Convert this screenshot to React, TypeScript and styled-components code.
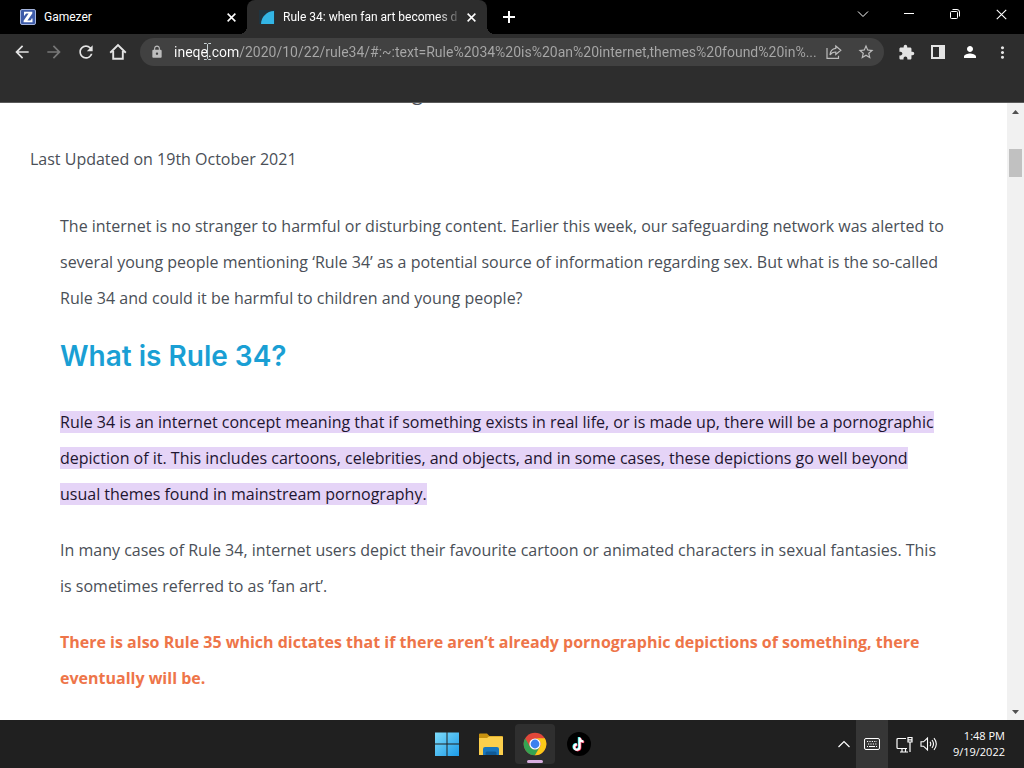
import React from "react";
import styled, { createGlobalStyle } from "styled-components";
import {
  MdArrowBack,
  MdArrowForward,
  MdRefresh,
  MdLock,
  MdStarBorder,
  MdExtension,
  MdPerson,
  MdMoreVert,
} from "react-icons/md";

const GlobalStyle = createGlobalStyle`
  * { box-sizing: border-box; }
  body { margin: 0; background: #fff; }
  button { border: 0; padding: 0; background: none; color: inherit; font: inherit; }
  svg { display: block; }
`;

const uiFont = `Roboto, "Noto Sans", sans-serif`;
const textFont = `"Open Sans", "Noto Sans", sans-serif`;

const Screen = styled.div`
  height: 100vh;
  display: flex;
  flex-direction: column;
  overflow: hidden;
  font-family: ${uiFont};
`;

/* ---------- tab strip ---------- */

const TabStrip = styled.header`
  display: flex;
  height: 34px;
  flex-shrink: 0;
  background: #000;
  color: #fff;
`;

const Tab = styled.div<{ $active?: boolean }>`
  position: relative;
  display: flex;
  align-items: center;
  gap: 8px;
  width: ${(p) => (p.$active ? 240 : 247)}px;
  padding: 0 10px 0 ${(p) => (p.$active ? 12 : 20)}px;
  border-radius: 8px 8px 0 0;
  background: ${(p) => (p.$active ? "#2d2d2d" : "#000")};

  &::before,
  &::after {
    content: ${(p) => (p.$active ? `""` : "none")};
    position: absolute;
    bottom: 0;
    width: 8px;
    height: 8px;
  }
  &::before {
    right: 100%;
    background: radial-gradient(circle at 0 0, #000 8px, #2d2d2d 8px);
  }
  &::after {
    left: 100%;
    background: radial-gradient(circle at 100% 0, #000 8px, #2d2d2d 8px);
  }
`;

const TabTitle = styled.span<{ $fade?: boolean }>`
  flex: 1;
  min-width: 0;
  overflow: hidden;
  white-space: nowrap;
  font-size: 12px;
  line-height: 18px;
  ${(p) => p.$fade && "mask-image: linear-gradient(to right, #000 154px, transparent 180px);"}
`;

const IconButton = styled.button<{ $w?: number; $h?: number; $dim?: boolean }>`
  display: flex;
  align-items: center;
  justify-content: center;
  flex-shrink: 0;
  width: ${(p) => p.$w ?? 32}px;
  height: ${(p) => p.$h ?? 28}px;
  color: ${(p) => (p.$dim ? "#777" : "inherit")};
`;

const NewTab = styled(IconButton)`
  margin-left: 8px;
  align-self: center;
`;

const WindowButtons = styled.div`
  display: flex;
  margin-left: auto;
`;

/* ---------- toolbar ---------- */

const Toolbar = styled.nav`
  display: flex;
  align-items: center;
  gap: 6px;
  height: 36px;
  padding: 0 6px;
  flex-shrink: 0;
  background: #2d2d2d;
  color: #e4e4e4;
`;

const ButtonGroup = styled.div`
  display: flex;
`;

const Omnibox = styled.form`
  display: flex;
  align-items: center;
  flex: 1;
  min-width: 0;
  height: 28px;
  padding-right: 2px;
  border-radius: 14px;
  background: #414141;
  color: #bdbdbd;
`;

const LockSlot = styled.span`
  display: flex;
  justify-content: center;
  width: 34px;
  flex-shrink: 0;
`;

const Address = styled.input`
  flex: 1;
  min-width: 0;
  height: 24px;
  padding: 0;
  border: 0;
  outline: 0;
  font-family: ${uiFont};
  font-size: 14px;
  line-height: 20px;
  color: #b0b0b0;
  background: linear-gradient(to right, #fff 65px, #a8a8a8 65px);
  background-clip: text;
  -webkit-background-clip: text;
  -webkit-text-fill-color: transparent;
`;

const BookmarksBar = styled.div`
  height: 33px;
  flex-shrink: 0;
  background: #2d2d2d;
  border-bottom: 1px solid #5a5a5a;
`;

/* ---------- page ---------- */

const Viewport = styled.main`
  display: flex;
  flex: 1;
  min-height: 0;
  background: #fff;
`;

const Page = styled.div`
  flex: 1;
  min-width: 0;
  overflow: hidden;
  padding: 0 30px;
  color: #4a4f57;
  font-family: ${textFont};
  font-size: 16px;
  line-height: 36px;
`;

const ScrolledLine = styled.p`
  margin: -28px 0 30px;
  padding-left: 382px;
  font-size: 20px;
`;

const Updated = styled.p`
  margin: 0 0 31px;
`;

const Article = styled.article`
  padding: 0 30px;

  p {
    margin: 0 0 20px;
  }
`;

const Heading = styled.h2`
  margin: 0 0 28px;
  font-family: Inter, sans-serif;
  font-size: 28px;
  font-weight: 600;
  line-height: 40px;
  color: #1a9fd4;
`;

const Highlight = styled.mark`
  background: #e5d4f7;
  color: #1e1530;
`;

const Callout = styled.p`
  color: #ee7549;
  font-weight: 700;
`;

const ScrollTrack = styled.div`
  display: flex;
  flex-direction: column;
  align-items: center;
  width: 17px;
  flex-shrink: 0;
  background: #f1f1f1;
`;

const ScrollThumb = styled.div`
  width: 13px;
  height: 28px;
  margin-top: 29px;
  margin-bottom: auto;
  background: #c1c1c1;
`;

/* ---------- taskbar ---------- */

const Taskbar = styled.footer`
  display: grid;
  grid-template-columns: 1fr auto 1fr;
  height: 48px;
  padding-left: 2px;
  flex-shrink: 0;
  background: #202020;
  color: #fff;
`;

const Apps = styled.div`
  grid-column: 2;
  display: flex;
  align-items: center;
  gap: 4px;
`;

const AppButton = styled.button<{ $active?: boolean }>`
  position: relative;
  display: flex;
  align-items: center;
  justify-content: center;
  width: 40px;
  height: 40px;
  border-radius: 4px;
  background: ${(p) => (p.$active ? "#2f2f2f" : "none")};

  &::after {
    content: ${(p) => (p.$active ? `""` : "none")};
    position: absolute;
    bottom: 1px;
    width: 16px;
    height: 3px;
    border-radius: 2px;
    background: #d9aee0;
  }
`;

const Tray = styled.div`
  display: flex;
  align-items: center;
  justify-content: flex-end;
  padding-right: 19px;
`;

const KeyboardButton = styled(IconButton)`
  height: 48px;
  background: #363636;
`;

const TrayStatus = styled.button`
  display: flex;
  align-items: center;
  gap: 6px;
  padding: 0 8px;
`;

const Clock = styled.time`
  margin-left: 7px;
  text-align: right;
  font-family: ${textFont};
  font-size: 11px;
  line-height: 16px;
`;

const Pointer = styled.svg`
  position: absolute;
  left: 203px;
  top: 43px;
  pointer-events: none;
`;

const CloseGlyph = ({ size = 9, weight = 1.7 }: { size?: number; weight?: number }) => (
  <svg width={size} height={size} viewBox="0 0 10 10" stroke="currentColor" strokeWidth={weight}>
    <path d="M.7.7l8.6 8.6M9.3.7L.7 9.3" />
  </svg>
);

const GamezerIcon = () => (
  <svg width="16" height="16" viewBox="0 0 16 16">
    <rect x=".5" y=".5" width="15" height="15" rx="1.5" fill="#3d5ba9" stroke="#a3b3dc" />
    <path d="M4 2.8h8.3v1.6L7.4 11.5h2.2c1 0 1.6-.6 1.9-2h1v3.8H3.6v-1.5l5-7.2H6.8c-1 0-1.5.5-1.8 1.8H4z" fill="#fff" />
  </svg>
);

const IneqeIcon = () => (
  <svg width="16" height="16" viewBox="0 0 16 16">
    <rect y="1" width="16" height="14" fill="#1f3440" />
    <path d="M15 2v13H2C2 8 8 2 15 2z" fill="#33b5e5" />
  </svg>
);

const WindowsLogo = () => (
  <svg width="24" height="24" viewBox="0 0 24 24">
    <defs>
      <linearGradient id="win" x1="0" y1="0" x2="24" y2="24" gradientUnits="userSpaceOnUse">
        <stop stopColor="#7fdcfb" />
        <stop offset="1" stopColor="#1c9be8" />
      </linearGradient>
    </defs>
    <path d="M0 .5h11.5V11.5H0zM12.5.5H24V11.5H12.5zM0 12.5h11.5V24H0zM12.5 12.5H24V24H12.5z" fill="url(#win)" />
  </svg>
);

const FolderIcon = () => (
  <svg width="26" height="24" viewBox="0 0 26 24">
    <path d="M1 2.5a1 1 0 0 1 1-1h7l2.5 2.5H24a1 1 0 0 1 1 1V12H1z" fill="#c8920f" />
    <path d="M1 6h8l2-1.5h13a1 1 0 0 1 1 1V23H1z" fill="#fccf4c" />
    <path d="M5 23v-6a2 2 0 0 1 2-2h12a2 2 0 0 1 2 2V23z" fill="#1976bd" />
    <path d="M9 19.5h8a1.5 1.5 0 0 1 1.5 1.5v2h-11v-2A1.5 1.5 0 0 1 9 19.5z" fill="#105a96" />
  </svg>
);

const ChromeIcon = () => (
  <svg width="24" height="24" viewBox="0 0 24 24">
    <circle cx="12" cy="12" r="11.3" fill="#e2473a" />
    <path d="M2.2 6.35A11.3 11.3 0 0 0 12 23.3l5-8.5-5 2.9-5-2.9z" fill="#35a352" />
    <path d="M21.8 6.35A11.3 11.3 0 0 1 12 23.3l4.9-8.5a5.6 5.6 0 0 0-4.9-8.45z" fill="#fbc918" />
    <circle cx="12" cy="12" r="5.6" fill="#fff" />
    <circle cx="12" cy="12" r="4.4" fill="#3c80ee" />
  </svg>
);

const TikTokIcon = () => {
  const note = "M12.6 5.5v9.6a2.7 2.7 0 1 1-2.7-2.7M12.6 5.8c.2 2.2 1.7 3.6 3.9 3.8";
  return (
    <svg width="24" height="24" viewBox="0 0 24 24" fill="none" strokeWidth="2.2">
      <circle cx="12" cy="12" r="12" fill="#000" />
      <path d={note} stroke="#25f4ee" transform="translate(-.7 -.4)" />
      <path d={note} stroke="#fe2c55" transform="translate(.7 .5)" />
      <path d={note} stroke="#fff" />
    </svg>
  );
};

export default function App() {
  return (
    <Screen>
      <GlobalStyle />
      <TabStrip>
        <Tab>
          <GamezerIcon />
          <TabTitle>Gamezer</TabTitle>
          <IconButton $w={12} aria-label="Close Gamezer"><CloseGlyph /></IconButton>
        </Tab>
        <Tab $active>
          <IneqeIcon />
          <TabTitle $fade>Rule 34: when fan art becomes d</TabTitle>
          <IconButton $w={12} aria-label="Close Rule 34"><CloseGlyph /></IconButton>
        </Tab>
        <NewTab $w={28} aria-label="New tab">
          <svg width="12" height="12" viewBox="0 0 12 12" stroke="currentColor" strokeWidth="2">
            <path d="M6 0v12M0 6h12" />
          </svg>
        </NewTab>
        <WindowButtons>
          <IconButton $w={46} aria-label="Search tabs">
            <svg width="12" height="8" viewBox="0 0 12 8" fill="none" stroke="currentColor">
              <path d="M1 1.5l5 5 5-5" />
            </svg>
          </IconButton>
          <IconButton $w={46} aria-label="Minimize">
            <svg width="10" height="2" viewBox="0 0 10 2"><path d="M0 0h10v1H0z" fill="currentColor" /></svg>
          </IconButton>
          <IconButton $w={46} aria-label="Restore">
            <svg width="10" height="10" viewBox="0 0 10 10" fill="none" stroke="currentColor">
              <rect x=".5" y="2.5" width="7" height="7" rx="1" />
              <path d="M2.5.5H7A2.5 2.5 0 0 1 9.5 3v4.5" />
            </svg>
          </IconButton>
          <IconButton $w={46} aria-label="Close window"><CloseGlyph size={11} weight={1} /></IconButton>
        </WindowButtons>
      </TabStrip>

      <Toolbar aria-label="Browser toolbar">
        <ButtonGroup>
          <IconButton aria-label="Back"><MdArrowBack size={20} /></IconButton>
          <IconButton $dim aria-label="Forward"><MdArrowForward size={20} /></IconButton>
          <IconButton aria-label="Reload"><MdRefresh size={20} /></IconButton>
          <IconButton aria-label="Home">
            <svg width="18" height="18" viewBox="0 0 18 18" fill="none" stroke="currentColor" strokeWidth="1.9">
              <path d="M1.2 9.7L9 2l7.8 7.7M4.2 8v7.8h9.6V8" />
            </svg>
          </IconButton>
        </ButtonGroup>
        <Omnibox>
          <LockSlot><MdLock size={14} /></LockSlot>
          <Address
            aria-label="Address"
            readOnly
            value="ineqe.com/2020/10/22/rule34/#:~:text=Rule%2034%20is%20an%20internet,themes%20found%20in%..."
          />
          <IconButton type="button" aria-label="Share">
            <svg width="16" height="16" viewBox="0 0 16 16" fill="none" stroke="currentColor" strokeWidth="1.2">
              <path d="M1 4v10.3h11.5v-2.5" />
              <path d="M9.8 2l5 4.2-5 4.2V8C7 8 5.2 9 4 11c.2-3.5 2-6.3 5.8-6.7z" />
            </svg>
          </IconButton>
          <IconButton type="button" aria-label="Bookmark this tab"><MdStarBorder size={18} /></IconButton>
        </Omnibox>
        <ButtonGroup>
          <IconButton aria-label="Extensions"><MdExtension size={17} /></IconButton>
          <IconButton aria-label="Side panel">
            <svg width="14" height="14" viewBox="0 0 14 14">
              <path d="M0 0h14v14H0zM2 2v10h6V2z" fill="currentColor" fillRule="evenodd" />
            </svg>
          </IconButton>
          <IconButton aria-label="Profile"><MdPerson size={18} color="#fff" /></IconButton>
          <IconButton aria-label="Menu"><MdMoreVert size={19} /></IconButton>
        </ButtonGroup>
      </Toolbar>
      <BookmarksBar />

      <Viewport>
        <Page>
          <ScrolledLine>g</ScrolledLine>
          <Updated>Last Updated on 19th October 2021</Updated>
          <Article>
            <p>
              The internet is no stranger to harmful or disturbing content. Earlier this week, our
              safeguarding network was alerted to several young people mentioning ‘Rule 34’ as a
              potential source of information regarding sex. But what is the so-called Rule 34 and
              could it be harmful to children and young people?
            </p>
            <Heading>What is Rule 34?</Heading>
            <p>
              <Highlight>
                Rule 34 is an internet concept meaning that if something exists in real life, or is
                made up, there will be a pornographic depiction of it. This includes cartoons,
                celebrities, and objects, and in some cases, these depictions go well beyond usual
                themes found in mainstream pornography.
              </Highlight>
            </p>
            <p>
              In many cases of Rule 34, internet users depict their favourite cartoon or animated
              characters in sexual fantasies. This is sometimes referred to as ’fan art’.
            </p>
            <Callout>
              There is also Rule 35 which dictates that if there aren’t already pornographic
              depictions of something, there eventually will be.
            </Callout>
          </Article>
        </Page>
        <ScrollTrack>
          <IconButton $w={17} $h={17} aria-label="Scroll up">
            <svg width="7" height="4" viewBox="0 0 7 4"><path d="M0 4L3.5 0L7 4z" fill="#505050" /></svg>
          </IconButton>
          <ScrollThumb />
          <IconButton $w={17} $h={17} aria-label="Scroll down">
            <svg width="7" height="4" viewBox="0 0 7 4"><path d="M0 0l3.5 4L7 0z" fill="#505050" /></svg>
          </IconButton>
        </ScrollTrack>
      </Viewport>

      <Taskbar>
        <Apps>
          <AppButton aria-label="Start"><WindowsLogo /></AppButton>
          <AppButton aria-label="File Explorer"><FolderIcon /></AppButton>
          <AppButton $active aria-label="Google Chrome"><ChromeIcon /></AppButton>
          <AppButton aria-label="TikTok"><TikTokIcon /></AppButton>
        </Apps>
        <Tray>
          <IconButton $w={24} aria-label="Show hidden icons">
            <svg width="12" height="8" viewBox="0 0 12 8" fill="none" stroke="currentColor" strokeWidth="1.2">
              <path d="M.5 7L6 1.5 11.5 7" />
            </svg>
          </IconButton>
          <KeyboardButton aria-label="Touch keyboard">
            <svg width="16" height="12" viewBox="0 0 16 12" fill="none" stroke="currentColor">
              <rect x=".5" y=".5" width="15" height="11" rx="1.5" />
              <path d="M3 3.5h10M4 6h9" strokeDasharray="1.2 1.2" />
              <path d="M3 8.5h1M5 8.5h6M12 8.5h1" />
            </svg>
          </KeyboardButton>
          <TrayStatus aria-label="Network and volume">
            <svg width="18" height="17" viewBox="0 0 18 17" fill="none" stroke="currentColor" strokeWidth="1.2">
              <path d="M10 2.5H2a1 1 0 0 0-1 1v8a1 1 0 0 0 1 1h9M4 16h8M6 12.5V16M9.5 12.5V16" />
              <path d="M12 1.5h4v4.5h-4zM14 6v10M12 3.8h4" />
            </svg>
            <svg width="18" height="16" viewBox="0 0 18 16" fill="none" stroke="currentColor" strokeWidth="1.1">
              <path d="M1 5.8h2.5L7.5 2v12l-4-3.8H1z" />
              <path d="M10 5.8q1.5 2.2 0 4.4M12 4q3 4 0 8M14 2.2q4.600 5.800 0 11.600" />
            </svg>
          </TrayStatus>
          <Clock>
            1:48 PM
            <br />
            9/19/2022
          </Clock>
        </Tray>
      </Taskbar>

      <Pointer width="9" height="17" viewBox="0 0 9 17" fill="none" stroke="#c9d3d6">
        <path d="M1 .5h2.5l1 1 1-1H8M4.5 1.5v14M1 16.5h2.5l1-1 1 1H8" />
      </Pointer>
    </Screen>
  );
}
